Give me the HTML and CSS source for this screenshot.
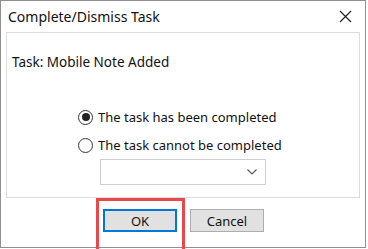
FILE: index.html
```html
<!DOCTYPE html>
<html>
<head>
<meta charset="utf-8">
<link rel="stylesheet" href="styles.css">
</head>
<body>
<div class="window">
  <div class="titlebar">
    <span class="title">Complete/Dismiss Task</span>
    <svg class="close" width="13" height="13" viewBox="0 0 13 13"><path d="M1 1 L12 12 M12 1 L1 12" stroke="#222" stroke-width="1.2" fill="none"/></svg>
  </div>
  <div class="panel">
    <div class="task">Task: Mobile Note Added</div>
    <div class="options">
      <label class="radio-row"><span class="radio checked"></span><span>The task has been completed</span></label>
      <label class="radio-row"><span class="radio"></span><span>The task cannot be completed</span></label>
      <div class="combo">
        <svg class="chev" width="10" height="6" viewBox="0 0 10 6"><path d="M0.5 0.5 L5 5 L9.5 0.5" stroke="#555" stroke-width="1.1" fill="none"/></svg>
      </div>
    </div>
  </div>
  <div class="buttons">
    <button class="btn default">OK</button>
    <button class="btn">Cancel</button>
  </div>
  <div class="highlight"></div>
</div>
</body>
</html>
```
FILE: styles.css
```css
* { box-sizing: border-box; }
html, body { margin: 0; padding: 0; background: #fff; }
body { font-family: "Noto Sans", "Open Sans", sans-serif; font-size: 13px; color: #111; width: 368px; height: 249px; overflow: hidden; }
.window { position: relative; width: 366px; height: 248px; border: 1px solid #8f8f8f; background: #fff; display: flex; flex-direction: column; }
.titlebar { height: 31px; display: flex; align-items: center; justify-content: space-between; padding: 0 13px 0 7px; }
.title { font-size: 14px; color: #111; }
.close { display: block; }
.panel { margin: 0 5px 0 5px; height: 166px; border: 1px solid #dcdcdc; padding: 20px 0 0 5px; display: flex; flex-direction: column; }
.task { line-height: 18px; height: 18px; font-size: 13.5px; }
.options { margin: 32px 0 0 66px; display: flex; flex-direction: column; }
.radio-row { display: flex; align-items: center; height: 28px; gap: 5px; }
.radio { width: 15px; height: 15px; border: 1px solid #333; border-radius: 50%; display: flex; align-items: center; justify-content: center; background: #fff; }
.radio.checked::after { content: ""; width: 8px; height: 8px; border-radius: 50%; background: #222; }
.combo { margin: 0 0 0 22px; width: 166px; height: 26px; border: 1px solid #cfcfcf; display: flex; align-items: center; justify-content: flex-end; padding-right: 8px; background: #fff; }
.buttons { display: flex; gap: 13px; padding: 11px 0 0 102px; }
.btn { width: 74px; height: 23px; border: 1px solid #adadad; background: #e1e1e1; font-family: inherit; font-size: 13px; color: #111; padding: 0; }
.btn.default { border: 2px solid #0078d7; }
.highlight { position: absolute; left: 95px; top: 197px; width: 89px; height: 60px; border: 3px solid #e8484c; }
```
